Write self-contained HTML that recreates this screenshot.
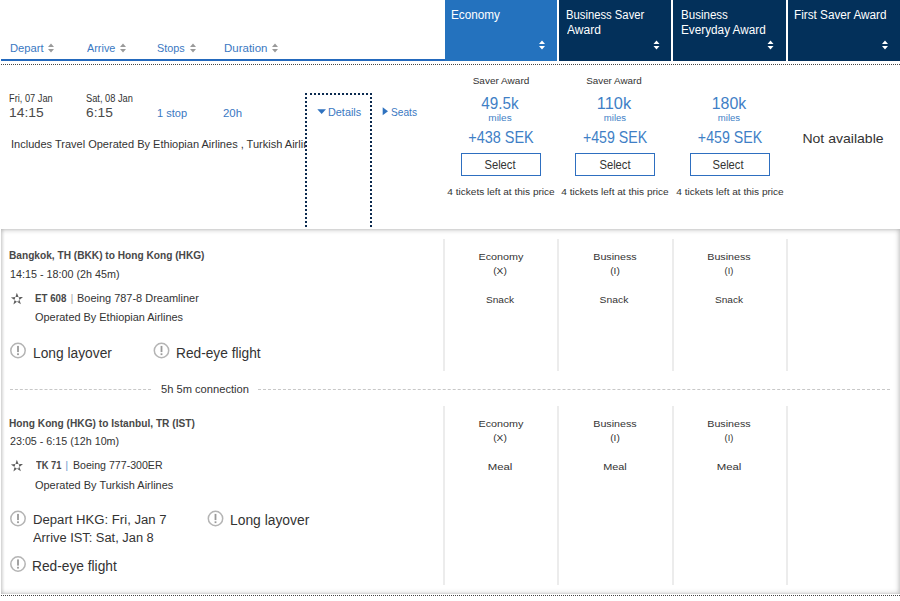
<!DOCTYPE html>
<html><head><meta charset="utf-8">
<style>
html,body{margin:0;padding:0}
body{width:900px;height:601px;position:relative;overflow:hidden;background:#fff;font-family:"Liberation Sans",sans-serif;color:#333}
.a{position:absolute}
.t{position:absolute;white-space:nowrap;line-height:20px;height:20px;transform-origin:0 0}
.sep{position:absolute;width:2px;background:#ececec}
</style></head><body>
<!--BODY-->
<!-- header left -->
<div class="a" style="left:1px;top:59px;width:444px;height:2px;background:#2369bd"></div>
<div class="a" style="left:1px;top:64px;width:899px;height:0;border-top:1px dotted #444"></div>
<svg class="a" style="left:0;top:0" width="900" height="61">
 <g fill="#9a9a9a">
  <path d="M48 47 L54 47 L51 43.5 Z M48 49 L54 49 L51 52.5 Z"/>
  <path d="M120 47 L126 47 L123 43.5 Z M120 49 L126 49 L123 52.5 Z"/>
  <path d="M190 47 L196 47 L193 43.5 Z M190 49 L196 49 L193 52.5 Z"/>
  <path d="M272 47 L278 47 L275 43.5 Z M272 49 L278 49 L275 52.5 Z"/>
 </g>
</svg>
<!-- header columns -->
<div class="a" style="left:445px;top:0;width:112px;height:61px;background:#2472be"></div>
<div class="a" style="left:559px;top:0;width:112px;height:61px;background:#03305a"></div>
<div class="a" style="left:673px;top:0;width:113px;height:61px;background:#03305a"></div>
<div class="a" style="left:788px;top:0;width:112px;height:61px;background:#03305a"></div>
<svg class="a" style="left:0;top:0" width="900" height="61">
 <g fill="#fff">
  <path d="M539 44 L545 44 L542 40.5 Z M539 46 L545 46 L542 49.5 Z"/>
  <path d="M653.5 44 L659.5 44 L656.5 40.5 Z M653.5 46 L659.5 46 L656.5 49.5 Z"/>
  <path d="M767.5 44 L773.5 44 L770.5 40.5 Z M767.5 46 L773.5 46 L770.5 49.5 Z"/>
  <path d="M882 44 L888 44 L885 40.5 Z M882 46 L888 46 L885 49.5 Z"/>
 </g>
</svg>

<!-- summary row -->
<div class="a" style="left:10.5px;top:134px;width:295px;height:20px;overflow:hidden"><div style="position:absolute;left:0;top:0;white-space:nowrap;line-height:20px;font-size:11.2px;transform:scaleX(0.985);transform-origin:0 0">Includes Travel Operated By Ethiopian Airlines , Turkish Airlines</div></div>

<div class="a" style="left:305px;top:93px;width:63px;height:136px;border:2px dotted #0b2a4f;border-bottom:0"></div>
<svg class="a" style="left:300px;top:100px" width="100" height="20">
 <path d="M17.3 9.3 L26 9.3 L21.65 14 Z" fill="#2f72bf"/>
 <path d="M82.7 7.3 L88 11.3 L82.7 15.3 Z" fill="#2f72bf"/>
</svg>

<!-- buttons -->
<div class="a" style="left:460.5px;top:153px;width:78px;height:21px;border:1px solid #2e6fc0"></div>
<div class="a" style="left:575px;top:153px;width:78px;height:21px;border:1px solid #2e6fc0"></div>
<div class="a" style="left:689.5px;top:153px;width:78px;height:21px;border:1px solid #2e6fc0"></div>

<!-- details panel -->
<div class="a" style="left:1px;top:229px;width:899px;height:365px;background:#fff;box-shadow:inset 0 2px 4px rgba(0,0,0,0.13),inset 2px 0 3px rgba(0,0,0,0.08),inset -3px 0 4px rgba(0,0,0,0.08),inset 0 -2px 4px rgba(0,0,0,0.1)"></div>
<div class="a" style="left:1px;top:595px;width:899px;height:0;border-top:1px dotted #444"></div>

<div class="sep" style="left:443px;top:239px;height:132px"></div>
<div class="sep" style="left:557px;top:239px;height:132px"></div>
<div class="sep" style="left:671.5px;top:239px;height:132px"></div>
<div class="sep" style="left:786px;top:239px;height:132px"></div>
<div class="sep" style="left:443px;top:406px;height:179px"></div>
<div class="sep" style="left:557px;top:406px;height:179px"></div>
<div class="sep" style="left:671.5px;top:406px;height:179px"></div>
<div class="sep" style="left:786px;top:406px;height:179px"></div>

<!-- star icons -->
<svg class="a" style="left:10.2px;top:291.8px" width="14" height="14" viewBox="0 0 14 14"><path fill="#606060" d="M5.44 5.06 L6.81 0.85 L8.56 5.06 Z M8.56 5.06 L12.98 5.06 L9.52 8.02 Z M9.52 8.02 L10.89 12.23 L7.00 9.85 Z M7.00 9.85 L3.42 12.45 L4.48 8.02 Z M4.48 8.02 L0.90 5.42 L5.44 5.06 Z"/><g stroke="#fff" stroke-width="0.45"><path d="M7 7.2 L5.3 4.8 M7 7.2 L9.7 5.1 M7 7.2 L8.7 9.7 M7 7.2 L4.2 8.2"/></g></svg>
<svg class="a" style="left:10.2px;top:459.2px" width="14" height="14" viewBox="0 0 14 14"><path fill="#606060" d="M5.44 5.06 L6.81 0.85 L8.56 5.06 Z M8.56 5.06 L12.98 5.06 L9.52 8.02 Z M9.52 8.02 L10.89 12.23 L7.00 9.85 Z M7.00 9.85 L3.42 12.45 L4.48 8.02 Z M4.48 8.02 L0.90 5.42 L5.44 5.06 Z"/><g stroke="#fff" stroke-width="0.45"><path d="M7 7.2 L5.3 4.8 M7 7.2 L9.7 5.1 M7 7.2 L8.7 9.7 M7 7.2 L4.2 8.2"/></g></svg>

<!-- warning icons -->
<svg class="a" style="left:0;top:330px" width="260" height="260">
 <defs><g id="w"><circle cx="8" cy="8" r="7.2" fill="none" stroke="#b4b4b4" stroke-width="1.5"/><rect x="7.1" y="3.4" width="1.8" height="6.2" fill="#9a9a9a"/><rect x="7.1" y="10.8" width="1.8" height="1.8" fill="#9a9a9a"/></g></defs>
 <use href="#w" x="10" y="12.5"/>
 <use href="#w" x="153.5" y="12.5"/>
 <use href="#w" x="10" y="180.5"/>
 <use href="#w" x="207.5" y="180.5"/>
 <use href="#w" x="10" y="226"/>
</svg>

<!-- connection -->
<div class="a" style="left:10px;top:389px;width:141px;height:0;border-top:1px dashed #c8c8c8"></div>
<div class="a" style="left:258px;top:389px;width:632px;height:0;border-top:1px dashed #c8c8c8"></div>

<div id="h_dep" class="t" style="left:9.59px;top:38.02px;font-size:11.5px;font-weight:400;color:#3a78c2;transform:scaleX(0.9756);">Depart</div>
<div id="h_arr" class="t" style="left:86.96px;top:38.02px;font-size:11.5px;font-weight:400;color:#3a78c2;transform:scaleX(0.9446);">Arrive</div>
<div id="h_stp" class="t" style="left:156.83px;top:38.02px;font-size:11.5px;font-weight:400;color:#3a78c2;transform:scaleX(0.9411);">Stops</div>
<div id="h_dur" class="t" style="left:224.43px;top:38.02px;font-size:11.5px;font-weight:400;color:#3a78c2;transform:scaleX(0.9995);">Duration</div>
<div id="c_eco" class="t" style="left:451.47px;top:4.84px;font-size:12px;font-weight:400;color:#fff;transform:scaleX(0.9794);">Economy</div>
<div id="c_bs1" class="t" style="left:565.73px;top:4.84px;font-size:12px;font-weight:400;color:#fff;transform:scaleX(0.9390);">Business Saver</div>
<div id="c_bs2" class="t" style="left:567.02px;top:19.84px;font-size:12px;font-weight:400;color:#fff;transform:scaleX(1.0014);">Award</div>
<div id="c_be1" class="t" style="left:680.76px;top:4.84px;font-size:12px;font-weight:400;color:#fff;transform:scaleX(0.9628);">Business</div>
<div id="c_be2" class="t" style="left:680.73px;top:19.84px;font-size:12px;font-weight:400;color:#fff;transform:scaleX(0.9797);">Everyday Award</div>
<div id="c_fs" class="t" style="left:794.46px;top:4.84px;font-size:12px;font-weight:400;color:#fff;transform:scaleX(0.9785);">First Saver Award</div>
<div id="s_fri" class="t" style="left:8.98px;top:88.53px;font-size:10px;font-weight:400;color:#333;transform:scaleX(0.9248);">Fri, 07 Jan</div>
<div id="s_t1" class="t" style="left:8.83px;top:103.29px;font-size:13.6px;font-weight:400;color:#4a4a4a;transform:scaleX(1.0179);">14:15</div>
<div id="s_sat" class="t" style="left:86.43px;top:88.53px;font-size:10px;font-weight:400;color:#333;transform:scaleX(0.9264);">Sat, 08 Jan</div>
<div id="s_t2" class="t" style="left:86.07px;top:103.29px;font-size:13.6px;font-weight:400;color:#4a4a4a;transform:scaleX(1.0131);">6:15</div>
<div id="s_stop" class="t" style="left:157.37px;top:103.19px;font-size:11px;font-weight:400;color:#3a78c2;transform:scaleX(1.0017);">1 stop</div>
<div id="s_20h" class="t" style="left:223.44px;top:103.19px;font-size:11px;font-weight:400;color:#3a78c2;transform:scaleX(1.0370);">20h</div>
<div id="s_det" class="t" style="left:327.52px;top:102.36px;font-size:10.5px;font-weight:400;color:#3a78c2;transform:scaleX(1.0333);">Details</div>
<div id="s_seat" class="t" style="left:390.95px;top:102.36px;font-size:10.5px;font-weight:400;color:#3a78c2;transform:scaleX(0.9698);">Seats</div>
<div id="f_sa1" class="t" style="left:400.61px;width:200px;text-align:center;transform-origin:50% 0;top:70.78px;font-size:9.3px;font-weight:400;color:#333;transform:scaleX(1.0775);">Saver Award</div>
<div id="f_sa2" class="t" style="left:514.49px;width:200px;text-align:center;transform-origin:50% 0;top:70.78px;font-size:9.3px;font-weight:400;color:#333;transform:scaleX(1.0577);">Saver Award</div>
<div id="f_m1" class="t" style="left:399.96px;width:200px;text-align:center;transform-origin:50% 0;top:93.32px;font-size:16.4px;font-weight:400;color:#3f7fc6;transform:scaleX(0.9292);">49.5k</div>
<div id="f_m2" class="t" style="left:514.31px;width:200px;text-align:center;transform-origin:50% 0;top:93.32px;font-size:16.4px;font-weight:400;color:#3f7fc6;transform:scaleX(1.0008);">110k</div>
<div id="f_m3" class="t" style="left:629.06px;width:200px;text-align:center;transform-origin:50% 0;top:93.32px;font-size:16.4px;font-weight:400;color:#3f7fc6;transform:scaleX(0.9706);">180k</div>
<div id="f_mi1" class="t" style="left:400.04px;width:200px;text-align:center;transform-origin:50% 0;top:108.12px;font-size:8.3px;font-weight:400;color:#3f7fc6;transform:scaleX(1.2107);">miles</div>
<div id="f_mi2" class="t" style="left:514.93px;width:200px;text-align:center;transform-origin:50% 0;top:108.12px;font-size:8.3px;font-weight:400;color:#3f7fc6;transform:scaleX(1.1488);">miles</div>
<div id="f_mi3" class="t" style="left:629.44px;width:200px;text-align:center;transform-origin:50% 0;top:108.12px;font-size:8.3px;font-weight:400;color:#3f7fc6;transform:scaleX(1.1538);">miles</div>
<div id="f_p1" class="t" style="left:401.21px;width:200px;text-align:center;transform-origin:50% 0;top:127.32px;font-size:16.4px;font-weight:400;color:#3f7fc6;transform:scaleX(0.8827);">+438 SEK</div>
<div id="f_p2" class="t" style="left:515.46px;width:200px;text-align:center;transform-origin:50% 0;top:127.32px;font-size:16.4px;font-weight:400;color:#3f7fc6;transform:scaleX(0.8647);">+459 SEK</div>
<div id="f_p3" class="t" style="left:629.87px;width:200px;text-align:center;transform-origin:50% 0;top:127.32px;font-size:16.4px;font-weight:400;color:#3f7fc6;transform:scaleX(0.8651);">+459 SEK</div>
<div id="f_s1" class="t" style="left:400.18px;width:200px;text-align:center;transform-origin:50% 0;top:155.17px;font-size:12.5px;font-weight:400;color:#333;transform:scaleX(0.8975);">Select</div>
<div id="f_s2" class="t" style="left:514.66px;width:200px;text-align:center;transform-origin:50% 0;top:155.17px;font-size:12.5px;font-weight:400;color:#333;transform:scaleX(0.8969);">Select</div>
<div id="f_s3" class="t" style="left:628.49px;width:200px;text-align:center;transform-origin:50% 0;top:155.17px;font-size:12.5px;font-weight:400;color:#333;transform:scaleX(0.8961);">Select</div>
<div id="f_tk1" class="t" style="left:400.63px;width:200px;text-align:center;transform-origin:50% 0;top:181.64px;font-size:9.7px;font-weight:400;color:#333;transform:scaleX(1.0391);">4 tickets left at this price</div>
<div id="f_tk2" class="t" style="left:515.17px;width:200px;text-align:center;transform-origin:50% 0;top:181.64px;font-size:9.7px;font-weight:400;color:#333;transform:scaleX(1.0392);">4 tickets left at this price</div>
<div id="f_tk3" class="t" style="left:629.97px;width:200px;text-align:center;transform-origin:50% 0;top:181.64px;font-size:9.7px;font-weight:400;color:#333;transform:scaleX(1.0388);">4 tickets left at this price</div>
<div id="f_na" class="t" style="left:742.96px;width:200px;text-align:center;transform-origin:50% 0;top:129.36px;font-size:13.4px;font-weight:400;color:#333;transform:scaleX(1.0478);">Not available</div>
<div id="l1_t" class="t" style="left:9.19px;top:245.05px;font-size:11.4px;font-weight:700;color:#484848;transform:scaleX(0.8904);">Bangkok, TH (BKK) to Hong Kong (HKG)</div>
<div id="l1_tm" class="t" style="left:9.62px;top:263.58px;font-size:11.3px;font-weight:400;color:#333;transform:scaleX(0.9526);">14:15 - 18:00 (2h 45m)</div>
<div id="l1_fn" class="t" style="left:35.04px;top:287.58px;font-size:11.3px;font-weight:700;color:#484848;transform:scaleX(0.8632);">ET 608</div>
<div id="l1_bar" class="t" style="left:-28.00px;width:200px;text-align:center;transform-origin:50% 0;top:287.58px;font-size:11.3px;font-weight:400;color:#aaa;transform:scaleX(1.0000);">|</div>
<div id="l1_ac" class="t" style="left:77.37px;top:287.58px;font-size:11.3px;font-weight:400;color:#333;transform:scaleX(0.9699);">Boeing 787-8 Dreamliner</div>
<div id="l1_op" class="t" style="left:35.15px;top:307.08px;font-size:11.3px;font-weight:400;color:#333;transform:scaleX(0.9664);">Operated By Ethiopian Airlines</div>
<div id="l1_w1" class="t" style="left:32.81px;top:343.15px;font-size:14px;font-weight:400;color:#333;transform:scaleX(0.9846);">Long layover</div>
<div id="l1_w2" class="t" style="left:176.32px;top:343.15px;font-size:14px;font-weight:400;color:#333;transform:scaleX(0.9792);">Red-eye flight</div>
<div id="l1_e1" class="t" style="left:401.09px;width:200px;text-align:center;transform-origin:50% 0;top:247.07px;font-size:9.9px;font-weight:400;color:#333;transform:scaleX(1.0908);">Economy</div>
<div id="l1_x1" class="t" style="left:399.98px;width:200px;text-align:center;transform-origin:50% 0;top:261.07px;font-size:9.9px;font-weight:400;color:#333;transform:scaleX(1.0326);">(X)</div>
<div id="l1_s1" class="t" style="left:400.01px;width:200px;text-align:center;transform-origin:50% 0;top:289.87px;font-size:9.9px;font-weight:400;color:#333;transform:scaleX(1.0251);">Snack</div>
<div id="l1_e2" class="t" style="left:514.80px;width:200px;text-align:center;transform-origin:50% 0;top:247.07px;font-size:9.9px;font-weight:400;color:#333;transform:scaleX(1.0826);">Business</div>
<div id="l1_x2" class="t" style="left:515.13px;width:200px;text-align:center;transform-origin:50% 0;top:261.07px;font-size:9.9px;font-weight:400;color:#333;transform:scaleX(1.0288);">(I)</div>
<div id="l1_s2" class="t" style="left:514.16px;width:200px;text-align:center;transform-origin:50% 0;top:289.87px;font-size:9.9px;font-weight:400;color:#333;transform:scaleX(1.0485);">Snack</div>
<div id="l1_e3" class="t" style="left:629.25px;width:200px;text-align:center;transform-origin:50% 0;top:247.07px;font-size:9.9px;font-weight:400;color:#333;transform:scaleX(1.0825);">Business</div>
<div id="l1_x3" class="t" style="left:629.25px;width:200px;text-align:center;transform-origin:50% 0;top:261.07px;font-size:9.9px;font-weight:400;color:#333;transform:scaleX(0.9446);">(I)</div>
<div id="l1_s3" class="t" style="left:629.01px;width:200px;text-align:center;transform-origin:50% 0;top:289.87px;font-size:9.9px;font-weight:400;color:#333;transform:scaleX(1.0251);">Snack</div>
<div id="conn" class="t" style="left:160.82px;top:379.19px;font-size:11px;font-weight:400;color:#333;transform:scaleX(1.0124);">5h 5m connection</div>
<div id="l2_t" class="t" style="left:9.19px;top:412.55px;font-size:11.4px;font-weight:700;color:#484848;transform:scaleX(0.8929);">Hong Kong (HKG) to Istanbul, TR (IST)</div>
<div id="l2_tm" class="t" style="left:10.01px;top:431.08px;font-size:11.3px;font-weight:400;color:#333;transform:scaleX(0.9493);">23:05 - 6:15 (12h 10m)</div>
<div id="l2_fn" class="t" style="left:35.91px;top:455.08px;font-size:11.3px;font-weight:700;color:#484848;transform:scaleX(0.8241);">TK 71</div>
<div id="l2_bar" class="t" style="left:-33.30px;width:200px;text-align:center;transform-origin:50% 0;top:455.08px;font-size:11.3px;font-weight:400;color:#7aa0d0;transform:scaleX(1.0000);">|</div>
<div id="l2_ac" class="t" style="left:72.86px;top:455.08px;font-size:11.3px;font-weight:400;color:#333;transform:scaleX(0.9382);">Boeing 777-300ER</div>
<div id="l2_op" class="t" style="left:35.15px;top:474.58px;font-size:11.3px;font-weight:400;color:#333;transform:scaleX(0.9703);">Operated By Turkish Airlines</div>
<div id="l2_w1a" class="t" style="left:32.51px;top:510.25px;font-size:13.7px;font-weight:400;color:#333;transform:scaleX(0.9595);">Depart HKG: Fri, Jan 7</div>
<div id="l2_w1b" class="t" style="left:33.20px;top:527.75px;font-size:13.7px;font-weight:400;color:#333;transform:scaleX(0.9393);">Arrive IST: Sat, Jan 8</div>
<div id="l2_w2" class="t" style="left:230.31px;top:510.15px;font-size:14px;font-weight:400;color:#333;transform:scaleX(0.9888);">Long layover</div>
<div id="l2_w3" class="t" style="left:32.45px;top:555.65px;font-size:14px;font-weight:400;color:#333;transform:scaleX(0.9813);">Red-eye flight</div>
<div id="l2_e1" class="t" style="left:401.09px;width:200px;text-align:center;transform-origin:50% 0;top:414.27px;font-size:9.9px;font-weight:400;color:#333;transform:scaleX(1.0908);">Economy</div>
<div id="l2_x1" class="t" style="left:399.98px;width:200px;text-align:center;transform-origin:50% 0;top:428.27px;font-size:9.9px;font-weight:400;color:#333;transform:scaleX(1.0326);">(X)</div>
<div id="l2_s1" class="t" style="left:400.44px;width:200px;text-align:center;transform-origin:50% 0;top:457.07px;font-size:9.9px;font-weight:400;color:#333;transform:scaleX(1.1516);">Meal</div>
<div id="l2_e2" class="t" style="left:514.80px;width:200px;text-align:center;transform-origin:50% 0;top:414.27px;font-size:9.9px;font-weight:400;color:#333;transform:scaleX(1.0826);">Business</div>
<div id="l2_x2" class="t" style="left:515.13px;width:200px;text-align:center;transform-origin:50% 0;top:428.27px;font-size:9.9px;font-weight:400;color:#333;transform:scaleX(1.0288);">(I)</div>
<div id="l2_s2" class="t" style="left:514.91px;width:200px;text-align:center;transform-origin:50% 0;top:457.07px;font-size:9.9px;font-weight:400;color:#333;transform:scaleX(1.1015);">Meal</div>
<div id="l2_e3" class="t" style="left:629.25px;width:200px;text-align:center;transform-origin:50% 0;top:414.27px;font-size:9.9px;font-weight:400;color:#333;transform:scaleX(1.0825);">Business</div>
<div id="l2_x3" class="t" style="left:629.25px;width:200px;text-align:center;transform-origin:50% 0;top:428.27px;font-size:9.9px;font-weight:400;color:#333;transform:scaleX(0.9446);">(I)</div>
<div id="l2_s3" class="t" style="left:629.02px;width:200px;text-align:center;transform-origin:50% 0;top:457.07px;font-size:9.9px;font-weight:400;color:#333;transform:scaleX(1.1516);">Meal</div>
</body></html>
